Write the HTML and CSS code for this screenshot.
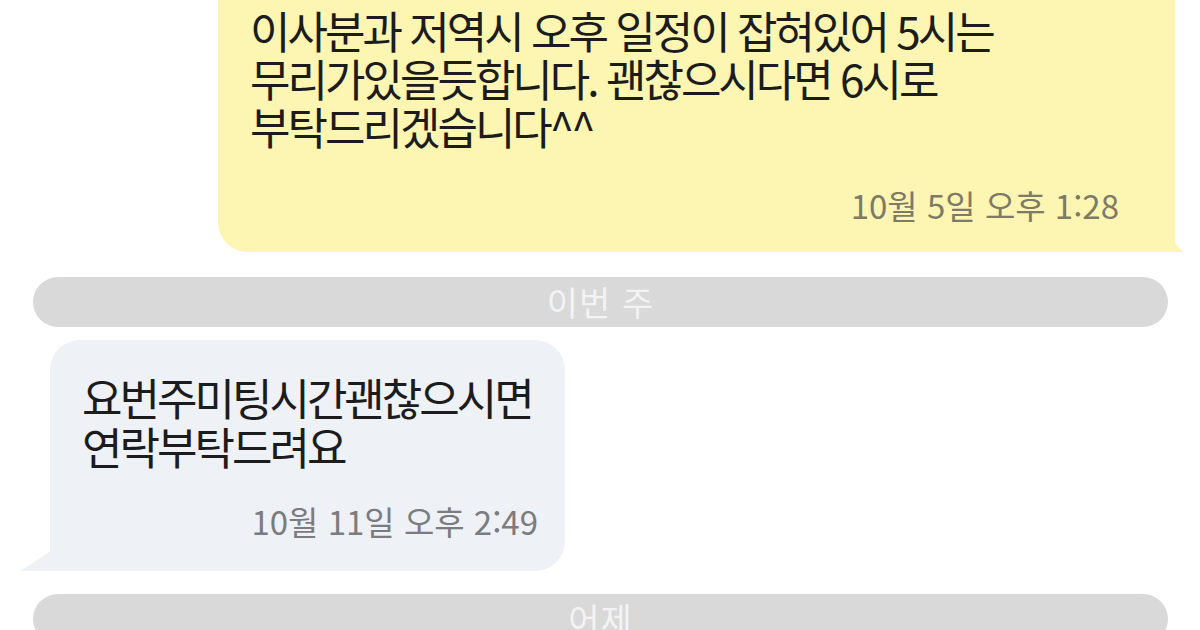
FILE: index.html
```html
<!DOCTYPE html>
<html lang="ko">
<head>
  <meta charset="UTF-8">
  <title>메시지</title>
  <link rel="stylesheet" href="styles.css">
</head>
<body>
  <div class="chat">
    <div class="bubble sent">
      <div class="text">이사분과 저역시 오후 일정이 잡혀있어 5시는<br>무리가있을듯합니다. 괜찮으시다면 6시로<br>부탁드리겠습니다^^</div>
      <div class="time">10월 5일 오후 1:28</div>
    </div>

    <div class="divider">이번 주</div>

    <div class="bubble recv">
      <div class="text">요번주미팅시간괜찮으시면<br>연락부탁드려요</div>
      <div class="time">10월 11일 오후 2:49</div>
    </div>

    <div class="divider">어제</div>
  </div>
</body>
</html>
```

FILE: styles.css
```css
body { margin: 0; background: #fff; font-family: "Noto Sans CJK KR", "Noto Sans", sans-serif; color: #1c1c1c; overflow: hidden; }
.chat { display: flex; flex-direction: column; width: 1200px; }

.bubble { position: relative; box-sizing: border-box; }
.bubble .text { white-space: nowrap; }
.bubble .time { text-align: right; font-size: 33px; line-height: 40px; letter-spacing: 0; }

.sent { margin-left: 218px; width: 957px; background: #fdf5b2; border-radius: 0 0 10px 30px; padding: 6px 56px 27px 32px; }
.sent .text { font-size: 44px; line-height: 48px; letter-spacing: -3px; }
.sent .time { margin-top: 35px; color: #7d7a66; }
.sent::after { content: ""; position: absolute; right: -8px; bottom: 0; width: 30px; height: 22px; background: #fdf5b2; border-radius: 0 0 0 6px; clip-path: polygon(0 0, 70% 55%, 100% 100%, 0 100%); }

.divider { margin: 25px 32px 0 33px; height: 50px; border-radius: 25px; background: #d9d9d9; color: #f3f3f3; font-size: 34px; line-height: 50px; text-align: center; letter-spacing: 1px; }

.recv { margin: 13px 0 0 50px; width: 515px; background: #eef1f5; border-radius: 30px 30px 30px 0; padding: 33px 27px 30px 32px; }
.recv .text { font-size: 44px; line-height: 49px; letter-spacing: -3px; }
.recv .time { margin-top: 30px; color: #7a7c80; }
.recv::after { content: ""; position: absolute; left: -30px; bottom: 0; width: 34px; height: 22px; background: #eef1f5; clip-path: polygon(100% 0, 30% 70%, 0 100%, 100% 100%); }

.recv + .divider { margin-top: 23px; }
```
